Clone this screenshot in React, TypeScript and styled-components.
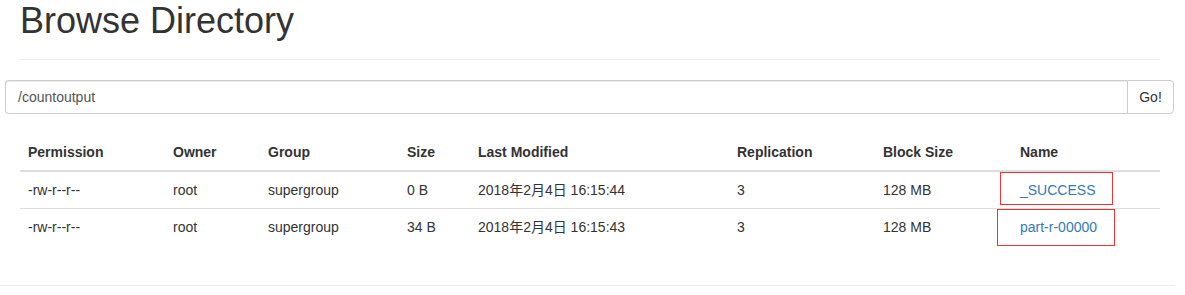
import React from "react";
import styled, { createGlobalStyle } from "styled-components";

interface FileRow {
    permission: string;
    owner: string;
    group: string;
    size: string;
    modified: string;
    replication: number;
    blockSize: string;
    name: string;
    mark: { left: number; top: number; width: number; height: number };
}

const files: FileRow[] = [
    {
        permission: "-rw-r--r--",
        owner: "root",
        group: "supergroup",
        size: "0 B",
        modified: "2018年2月4日 16:15:44",
        replication: 3,
        blockSize: "128 MB",
        name: "_SUCCESS",
        mark: { left: -12, top: 0, width: 113, height: 33 },
    },
    {
        permission: "-rw-r--r--",
        owner: "root",
        group: "supergroup",
        size: "34 B",
        modified: "2018年2月4日 16:15:43",
        replication: 3,
        blockSize: "128 MB",
        name: "part-r-00000",
        mark: { left: -15, top: 0, width: 118, height: 37 },
    },
];

// 컬럼 정의
const columns = [
    { label: "Permission", width: 145 },
    { label: "Owner", width: 95 },
    { label: "Group", width: 139 },
    { label: "Size", width: 71 },
    { label: "Last Modified", width: 259 },
    { label: "Replication", width: 146 },
    { label: "Block Size", width: 137 },
    { label: "Name", width: 148 },
];

export default function App() {
    return (
        <>
            <GlobalStyle />
            <Page>
                <PageHeader>
                    <Title>Browse Directory</Title>
                </PageHeader>
                <InputGroup>
                    <PathInput defaultValue="/countoutput" />
                    <GoButton>Go!</GoButton>
                </InputGroup>
                <Table>
                    <colgroup>
                        {columns.map((c) => (
                            <col key={c.label} style={{ width: c.width }} />
                        ))}
                    </colgroup>
                    <thead>
                        <tr>
                            {columns.map((c) => (
                                <Th key={c.label}>{c.label}</Th>
                            ))}
                        </tr>
                    </thead>
                    <tbody>
                        {files.map((f) => (
                            <tr key={f.name}>
                                <Td>{f.permission}</Td>
                                <Td>{f.owner}</Td>
                                <Td>{f.group}</Td>
                                <Td>{f.size}</Td>
                                <Td>{f.modified}</Td>
                                <Td>{f.replication}</Td>
                                <Td>{f.blockSize}</Td>
                                <NameCell>
                                    <FileLink href="#">{f.name}</FileLink>
                                    <Mark
                                        $left={f.mark.left}
                                        $top={f.mark.top}
                                        $width={f.mark.width}
                                        $height={f.mark.height}
                                    />
                                </NameCell>
                            </tr>
                        ))}
                    </tbody>
                </Table>
                <Rule />
            </Page>
        </>
    );
}

const GlobalStyle = createGlobalStyle`
    body {
        margin: 0;
        background: #fff;
        color: #333;
        font-family: "Liberation Sans", Arial, "Noto Sans CJK SC", sans-serif;
        font-size: 14px;
        line-height: 20px;
    }
`;

const Page = styled.div`
    width: 1185px;
    display: flex;
    flex-direction: column;
`;

// 페이지 헤더
const PageHeader = styled.div`
    margin: 0 25px 0 20px;
    padding-bottom: 9px;
    border-bottom: 1px solid #eee;
`;

const Title = styled.h1`
    margin: 1px 0 9px;
    font-size: 36px;
    font-weight: 500;
    line-height: 39.6px;
    color: #333;
`;

// 경로 입력
const InputGroup = styled.div`
    display: flex;
    margin: 20px 11px 0 5px;
    height: 34px;
`;

const PathInput = styled.input`
    flex: 1;
    min-width: 0;
    height: 34px;
    box-sizing: border-box;
    padding: 6px 12px;
    font: inherit;
    color: #555;
    border: 1px solid #ccc;
    border-right: none;
    border-radius: 4px 0 0 4px;
    box-shadow: inset 0 1px 1px rgba(0, 0, 0, 0.075);
    outline: none;
`;

const GoButton = styled.button`
    width: 47px;
    height: 34px;
    box-sizing: border-box;
    padding: 6px 0;
    font: inherit;
    color: #333;
    background: #fff;
    border: 1px solid #ccc;
    border-radius: 0 4px 4px 0;
    cursor: pointer;
`;

// 파일 테이블
const Table = styled.table`
    margin: 20px 25px 0 20px;
    width: 1140px;
    table-layout: fixed;
    border-collapse: collapse;
    border-spacing: 0;
`;

const Th = styled.th`
    padding: 8px;
    text-align: left;
    font-weight: bold;
    line-height: 20px;
    border-bottom: 2px solid #ddd;
`;

const Td = styled.td`
    padding: 8px;
    line-height: 20px;
    border-top: 1px solid #ddd;
    white-space: nowrap;
`;

const NameCell = styled(Td)`
    position: relative;
`;

const FileLink = styled.a`
    color: #337ab7;
    text-decoration: none;
`;

// 빨간 강조 박스
const Mark = styled.div<{ $left: number; $top: number; $width: number; $height: number }>`
    position: absolute;
    left: ${(p) => p.$left}px;
    top: ${(p) => p.$top}px;
    width: ${(p) => p.$width}px;
    height: ${(p) => p.$height}px;
    box-sizing: border-box;
    border: 1px solid #ee3333;
    pointer-events: none;
`;

const Rule = styled.hr`
    margin: 40px 10px 0 0;
    border: 0;
    border-top: 1px solid #eee;
`;
